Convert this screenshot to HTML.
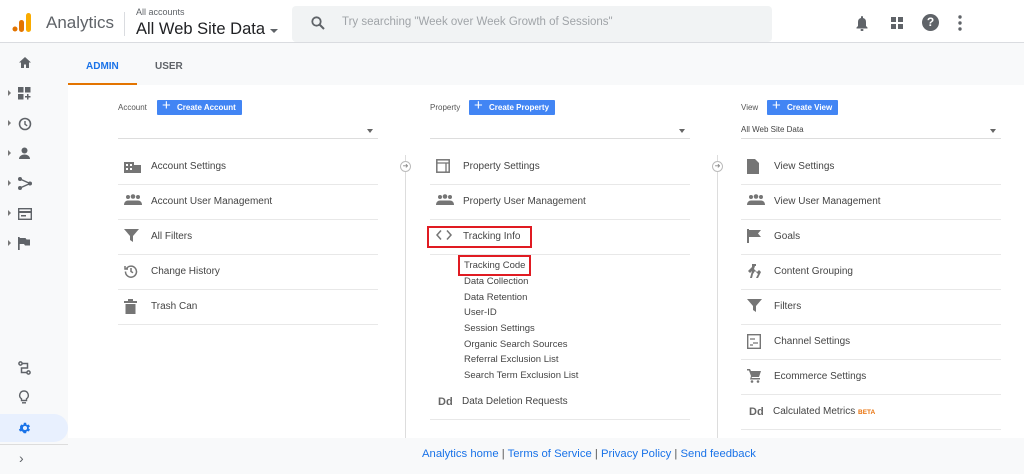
<!DOCTYPE html>
<html><head><meta charset="utf-8"><style>
*{margin:0;padding:0;box-sizing:border-box}
body{width:1024px;height:474px;overflow:hidden;background:#f8f9fa;font-family:"Liberation Sans",Arial,sans-serif;position:relative;color:#3c4043}
.a{position:absolute}
.hdr{left:0;top:0;width:1024px;height:43px;background:#fff;border-bottom:1px solid #dadce0}
.main{left:68px;top:43px;width:956px;height:395px;background:#fff}
.tabs{left:68px;top:43px;width:956px;height:42px;background:#f8f9fa}
.row{position:absolute;width:260px;height:35px;border-bottom:1px solid #e8e8e8;font-size:10px;color:#444;line-height:34px;padding-left:33px}
.row svg{position:absolute;left:6px;top:9px}
.btn{position:absolute;height:15px;background:#4285f4;color:#fff;font-size:8px;font-weight:bold;line-height:15px;padding:0 6px 0 20px;border-radius:1px}
.btn:before{content:"+";position:absolute;left:5px;top:-2px;font-size:15px;font-weight:normal}
.lbl{position:absolute;font-size:8px;color:#555}
.sel{position:absolute;width:260px;height:15px;border-bottom:1px solid #ddd;font-size:8px;color:#444}
.sel:after{content:"";position:absolute;right:5px;top:5px;border:3.5px solid transparent;border-top:4px solid #666}
.sub{position:absolute;left:464px;font-size:9.5px;color:#444}
.vl{position:absolute;width:1px;background:#ddd;top:155px;height:283px}
.circ{position:absolute;width:11px;height:11px;border:1px solid #bbb;border-radius:50%;background:#fff;font-size:7px;line-height:9px;text-align:center;color:#888}
.si{position:absolute;left:18px}
.ar{position:absolute;left:8px;border:3px solid transparent;border-left:3px solid #777}
</style></head><body>
<div class="a hdr"></div>
<svg class="a" style="left:11px;top:11px" width="22" height="22"><circle cx="4" cy="18" r="2.5" fill="#e37400"/><rect x="8" y="9" width="5" height="12" rx="2.5" fill="#e37400"/><rect x="15" y="2" width="5" height="19" rx="2.5" fill="#f9ab00"/></svg>
<div class="a" style="left:46px;top:13px;font-size:17px;color:#5f6368">Analytics</div>
<div class="a" style="left:124px;top:12px;width:1px;height:24px;background:#dadce0"></div>
<div class="a" style="left:136px;top:7px;font-size:9px;color:#5f6368">All accounts</div>
<div class="a" style="left:136px;top:20px;font-size:16.5px;color:#202124">All Web Site Data</div>
<div class="a" style="left:270px;top:29px;border:4px solid transparent;border-top:4px solid #5f6368"></div>
<div class="a" style="left:292px;top:6px;width:480px;height:36px;background:#f1f3f4;border-radius:4px"></div>
<svg class="a" style="left:311px;top:16px" width="14" height="14"><circle cx="5.5" cy="5.5" r="4.2" fill="none" stroke="#5f6368" stroke-width="1.8"/><line x1="8.5" y1="8.5" x2="13" y2="13" stroke="#5f6368" stroke-width="2"/></svg>
<div class="a" style="left:342px;top:16px;font-size:11.5px;color:#a0a4a8">Try searching "Week over Week Growth of Sessions"</div>
<svg class="a" style="left:855px;top:15px" width="14" height="16"><path d="M7 1a1 1 0 0 1 1 1v1a4 4 0 0 1 3 4v4l1.5 1.5v1h-11v-1L3 11V7a4 4 0 0 1 3-4V2a1 1 0 0 1 1-1z" fill="#5f6368"/><rect x="5.5" y="14" width="3" height="2" rx="1" fill="#5f6368"/></svg>
<svg class="a" style="left:891px;top:17px" width="12" height="12" fill="#5f6368"><rect width="5" height="5"/><rect x="7" width="5" height="5"/><rect y="7" width="5" height="5"/><rect x="7" y="7" width="5" height="5"/></svg>
<div class="a" style="left:922px;top:14px;width:17px;height:17px;border-radius:50%;background:#5f6368;color:#fff;font-size:12px;font-weight:bold;text-align:center;line-height:17px">?</div>
<svg class="a" style="left:958px;top:15px" width="4" height="16" fill="#5f6368"><circle cx="2" cy="2" r="1.7"/><circle cx="2" cy="8" r="1.7"/><circle cx="2" cy="14" r="1.7"/></svg>

<div class="a main"></div>
<div class="a tabs"></div>
<div class="a" style="left:68px;top:83px;width:69px;height:2px;background:#e37400"></div>
<div class="a" style="left:86px;top:61px;font-size:10px;font-weight:bold;color:#1a73e8">ADMIN</div>
<div class="a" style="left:155px;top:61px;font-size:10px;font-weight:bold;color:#5f6368">USER</div>

<svg class="a si" style="top:56px" width="14" height="13" fill="#5f6368"><path d="M7 1L1 6.5h2V12h3V8.5h2V12h3V6.5h2z"/></svg>
<div class="ar" style="top:90px"></div><svg class="a si" style="top:87px" width="13" height="13" fill="#5f6368"><rect width="5.5" height="5.5"/><rect x="7" width="5.5" height="5.5"/><rect y="7" width="5.5" height="5.5"/><path d="M9 7h1.5v2h2v1.5h-2v2H9v-2H7V9h2z"/></svg>
<div class="ar" style="top:120px"></div><svg class="a si" style="top:117px" width="14" height="14"><circle cx="7" cy="7" r="5.5" fill="none" stroke="#5f6368" stroke-width="1.6"/><path d="M7 4v3.3l2.2 1.5" fill="none" stroke="#5f6368" stroke-width="1.4"/></svg>
<div class="ar" style="top:150px"></div><svg class="a si" style="top:147px" width="13" height="13" fill="#5f6368"><circle cx="6.5" cy="3.5" r="3"/><path d="M1 12c0-3 3-4.5 5.5-4.5S12 9 12 12z"/></svg>
<div class="ar" style="top:180px"></div><svg class="a si" style="top:177px" width="14" height="13" fill="#5f6368"><circle cx="2" cy="2" r="2"/><circle cx="2" cy="11" r="2"/><circle cx="12" cy="6.5" r="2"/><path d="M2 2l10 4.5L2 11" fill="none" stroke="#5f6368" stroke-width="1.4"/></svg>
<div class="ar" style="top:210px"></div><svg class="a si" style="top:208px" width="14" height="12"><rect x="0.7" y="0.7" width="12.6" height="10.6" fill="none" stroke="#5f6368" stroke-width="1.4"/><rect x="1" y="3" width="12" height="2" fill="#5f6368"/><rect x="3" y="7" width="5" height="1.5" fill="#5f6368"/></svg>
<div class="ar" style="top:240px"></div><svg class="a si" style="top:237px" width="12" height="13" fill="#5f6368"><rect width="1.7" height="13"/><path d="M1.5 1h6l1 1.5H12v6H7l-1-1.5H1.5z"/></svg>
<svg class="a si" style="top:361px" width="13" height="14" fill="none" stroke="#5f6368" stroke-width="1.5"><circle cx="2.5" cy="2.5" r="1.6"/><circle cx="10.5" cy="11.5" r="1.6"/><path d="M4 2.5h5.5v4.5h-6v4.5H9"/></svg>
<svg class="a si" style="top:390px" width="12" height="14" fill="none" stroke="#5f6368" stroke-width="1.4"><path d="M6 1a4.3 4.3 0 0 0-2.5 7.8V10.5h5V8.8A4.3 4.3 0 0 0 6 1z"/><path d="M4 12.8h4"/></svg>
<div class="a" style="left:0;top:414px;width:68px;height:28px;background:#e8f0fe;border-radius:0 14px 14px 0"></div>
<svg class="a si" style="top:421px" width="14" height="14" viewBox="0 0 24 24" fill="#1a73e8"><path d="M19.4 13a7.5 7.5 0 0 0 0-2l2.1-1.6-2-3.5-2.5 1a7 7 0 0 0-1.7-1L15 3h-4l-.4 2.9a7 7 0 0 0-1.7 1l-2.5-1-2 3.5L4.6 11a7.5 7.5 0 0 0 0 2l-2.1 1.6 2 3.5 2.5-1a7 7 0 0 0 1.7 1L11 21h4l.4-2.9a7 7 0 0 0 1.7-1l2.5 1 2-3.5zM13 15.5a3.5 3.5 0 1 1 0-7 3.5 3.5 0 0 1 0 7z" transform="translate(-1 0)"/></svg>
<div class="a" style="left:0;top:444px;width:68px;height:1px;background:#ddd"></div>
<div class="a" style="left:19px;top:450px;font-size:14px;color:#5f6368">›</div>

<div class="lbl" style="left:118px;top:103px">Account</div>
<div class="btn" style="left:157px;top:100px">Create Account</div>
<div class="sel" style="left:118px;top:124px"></div>
<div class="row" style="left:118px;top:150px"><svg width="17" height="14" fill="#757575"><rect x="0" y="3" width="10" height="11"/><rect x="10" y="6" width="7" height="8"/><rect x="2" y="5" width="2" height="2" fill="#fff"/><rect x="6" y="5" width="2" height="2" fill="#fff"/><rect x="2" y="9" width="2" height="2" fill="#fff"/><rect x="6" y="9" width="2" height="2" fill="#fff"/></svg>Account Settings</div>
<div class="row" style="left:118px;top:185px"><svg width="18" height="12" fill="#757575"><circle cx="4" cy="3" r="2"/><circle cx="9" cy="2.5" r="2.3"/><circle cx="14" cy="3" r="2"/><path d="M0 11c0-3 2-4.5 4-4.5h10c2 0 4 1.5 4 4.5z"/></svg>Account User Management</div>
<div class="row" style="left:118px;top:220px"><svg width="15" height="13" fill="#757575"><path d="M0 0h15L9 7v6l-3-2V7z"/></svg>All Filters</div>
<div class="row" style="left:118px;top:255px"><svg width="14" height="14" fill="none" stroke="#757575" stroke-width="1.5"><path d="M2.5 4.5A5.5 5.5 0 1 1 1.5 7.5"/><path d="M1 2v3h3" /><path d="M7 4v3.5l2 1.3"/></svg>Change History</div>
<div class="row" style="left:118px;top:290px"><svg width="13" height="15" fill="#757575"><rect x="0" y="2" width="13" height="2"/><rect x="4" y="0" width="5" height="2"/><rect x="1.5" y="5" width="10" height="10"/></svg>Trash Can</div>

<div class="vl" style="left:405px"></div>
<div class="circ" style="left:400px;top:161px">➜</div>
<div class="vl" style="left:717px"></div>
<div class="circ" style="left:712px;top:161px">➜</div>

<div class="lbl" style="left:430px;top:103px">Property</div>
<div class="btn" style="left:469px;top:100px">Create Property</div>
<div class="sel" style="left:430px;top:124px"></div>
<div class="row" style="left:430px;top:150px"><svg width="14" height="14"><rect x="0.8" y="0.8" width="12.4" height="12.4" fill="none" stroke="#757575" stroke-width="1.5"/><path d="M1 4h12M10 4v9" stroke="#757575" stroke-width="1.3"/></svg>Property Settings</div>
<div class="row" style="left:430px;top:185px"><svg width="18" height="12" fill="#757575"><circle cx="4" cy="3" r="2"/><circle cx="9" cy="2.5" r="2.3"/><circle cx="14" cy="3" r="2"/><path d="M0 11c0-3 2-4.5 4-4.5h10c2 0 4 1.5 4 4.5z"/></svg>Property User Management</div>
<div class="row" style="left:430px;top:220px"><svg width="16" height="12" fill="none" stroke="#757575" stroke-width="1.5"><path d="M5 1.5L1 6l4 4.5M11 1.5L15 6l-4 4.5"/></svg>Tracking Info</div>
<div class="a" style="left:427px;top:226px;width:105px;height:22px;border:2px solid #e01b22"></div>
<div class="sub" style="top:260px">Tracking Code</div>
<div class="a" style="left:458px;top:255px;width:73px;height:21px;border:2px solid #e01b22"></div>
<div class="sub" style="top:276px">Data Collection</div>
<div class="sub" style="top:292px">Data Retention</div>
<div class="sub" style="top:307px">User-ID</div>
<div class="sub" style="top:323px">Session Settings</div>
<div class="sub" style="top:339px">Organic Search Sources</div>
<div class="sub" style="top:354px">Referral Exclusion List</div>
<div class="sub" style="top:370px">Search Term Exclusion List</div>
<div class="row" style="left:430px;top:385px;padding-left:32px"><span style="position:absolute;left:8px;font-weight:bold;color:#666;font-size:11px">Dd</span>Data Deletion Requests</div>

<div class="lbl" style="left:741px;top:103px">View</div>
<div class="btn" style="left:767px;top:100px">Create View</div>
<div class="sel" style="left:741px;top:124px;padding-top:1px">All Web Site Data</div>
<div class="row" style="left:741px;top:150px"><svg width="12" height="15" fill="#757575"><path d="M0 0h8l4 4v11H0z"/></svg>View Settings</div>
<div class="row" style="left:741px;top:185px"><svg width="18" height="12" fill="#757575"><circle cx="4" cy="3" r="2"/><circle cx="9" cy="2.5" r="2.3"/><circle cx="14" cy="3" r="2"/><path d="M0 11c0-3 2-4.5 4-4.5h10c2 0 4 1.5 4 4.5z"/></svg>View User Management</div>
<div class="row" style="left:741px;top:220px"><svg width="14" height="14" fill="#757575"><rect x="0" y="0" width="2" height="14"/><path d="M2 1h12l-3 3.5 3 3.5H2z"/></svg>Goals</div>
<div class="row" style="left:741px;top:255px"><svg width="14" height="14" fill="#757575"><path d="M5 0h4v2H8l-1 3 3 3 2-2 2 2-3 6H9l2-4-3-3-2 3-1 4H3l2-7-2 2-2-2 4-4z"/></svg>Content Grouping</div>
<div class="row" style="left:741px;top:290px"><svg width="15" height="13" fill="#757575"><path d="M0 0h15L9 7v6l-3-2V7z"/></svg>Filters</div>
<div class="row" style="left:741px;top:325px"><svg width="14" height="15"><rect x="0.7" y="0.7" width="12.6" height="13.6" fill="none" stroke="#757575" stroke-width="1.4"/><path d="M3 5h5M6 9h5M3 11h3" stroke="#757575" stroke-width="1.3"/></svg>Channel Settings</div>
<div class="row" style="left:741px;top:360px"><svg width="14" height="14" fill="#757575"><path d="M0 0h3l1 2h10l-2 6H5l-.5 1H13v1.5H3L4 7 2 1.5H0z"/><circle cx="5" cy="12.5" r="1.3"/><circle cx="11" cy="12.5" r="1.3"/></svg>Ecommerce Settings</div>
<div class="row" style="left:741px;top:395px;padding-left:32px"><span style="position:absolute;left:8px;font-weight:bold;color:#666;font-size:11px">Dd</span>Calculated Metrics <span style="color:#e8710a;font-size:6.5px;font-weight:bold">BETA</span></div>

<div class="a" style="left:422px;top:448px;white-space:nowrap;font-size:11.3px;color:#555"><span style="color:#1a73e8">Analytics home</span> | <span style="color:#1a73e8">Terms of Service</span> | <span style="color:#1a73e8">Privacy Policy</span> | <span style="color:#1a73e8">Send feedback</span></div>
</body></html>
